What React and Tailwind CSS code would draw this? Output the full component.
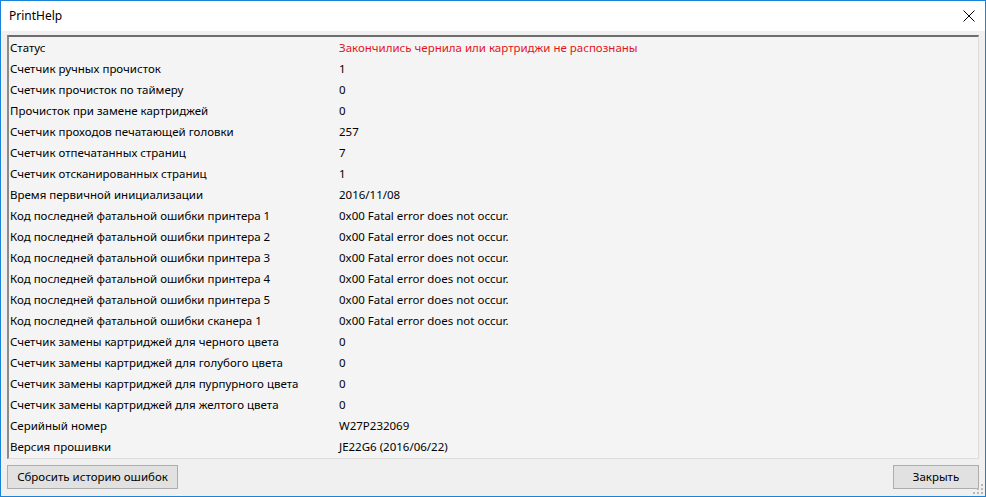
import React from 'react';

const rows = [
  ['Статус', 'Закончились чернила или картриджи не распознаны', true],
  ['Счетчик ручных прочисток', '1'],
  ['Счетчик прочисток по таймеру', '0'],
  ['Прочисток при замене картриджей', '0'],
  ['Счетчик проходов печатающей головки', '257'],
  ['Счетчик отпечатанных страниц', '7'],
  ['Счетчик отсканированных страниц', '1'],
  ['Время первичной инициализации', '2016/11/08'],
  ['Код последней фатальной ошибки принтера 1', '0x00 Fatal error does not occur.'],
  ['Код последней фатальной ошибки принтера 2', '0x00 Fatal error does not occur.'],
  ['Код последней фатальной ошибки принтера 3', '0x00 Fatal error does not occur.'],
  ['Код последней фатальной ошибки принтера 4', '0x00 Fatal error does not occur.'],
  ['Код последней фатальной ошибки принтера 5', '0x00 Fatal error does not occur.'],
  ['Код последней фатальной ошибки сканера 1', '0x00 Fatal error does not occur.'],
  ['Счетчик замены картриджей для черного цвета', '0'],
  ['Счетчик замены картриджей для голубого цвета', '0'],
  ['Счетчик замены картриджей для пурпурного цвета', '0'],
  ['Счетчик замены картриджей для желтого цвета', '0'],
  ['Серийный номер', 'W27P232069'],
  ['Версия прошивки', 'JE22G6 (2016/06/22)'],
];

function SizeGrip() {
  const dots = [
    [8, 0], [4, 4], [8, 4], [0, 8], [4, 8], [8, 8],
  ];
  return (
    <svg className="absolute right-[1px] bottom-[1px]" width="11" height="11" viewBox="0 0 11 11">
      {dots.map(([x, y], i) => (
        <rect key={i} x={x} y={y} width="2" height="2" fill="#b8b8b8" />
      ))}
    </svg>
  );
}

export default function App() {
  return (
    <div className="relative w-[986px] h-[497px] border border-[#1883d7] flex flex-col bg-[#f0f0f0] text-[11.5px] text-black font-['Noto_Sans',sans-serif]">
      <div className="h-[30px] shrink-0 bg-white flex items-center justify-between pl-[8px]">
        <span className="text-[12px]">PrintHelp</span>
        <button className="w-[32px] h-[30px] flex items-center justify-center">
          <svg width="12" height="12" viewBox="0 0 12 12">
            <path d="M0.5 0.5 L11.5 11.5 M11.5 0.5 L0.5 11.5" stroke="#000" strokeWidth="1" />
          </svg>
        </button>
      </div>

      <div className="flex-1 flex flex-col px-[6px] pt-[4px]">
        <div className="h-[424px] border-t-2 border-l-2 border-r border-b border-t-[#6d6d6d] border-l-[#8a8a8a] border-r-[#dcdcdc] border-b-[#dcdcdc] bg-[#f4f4f4] overflow-hidden">
          {rows.map(([label, value, alert]) => (
            <div key={label} className="h-[21px] flex items-center">
              <div className="w-[330px] pl-[1px] whitespace-nowrap">{label}</div>
              <div className={alert ? 'text-[#e3141b]' : ''}>{value}</div>
            </div>
          ))}
        </div>

        <div className="mt-[6px] flex justify-between">
          <button className="h-[24px] w-[171px] border border-[#adadad] bg-[#e1e1e1]">
            Сбросить историю ошибок
          </button>
          <button className="h-[24px] w-[86px] border border-[#adadad] bg-[#e1e1e1]">
            Закрыть
          </button>
        </div>
      </div>
      <SizeGrip />
    </div>
  );
}
